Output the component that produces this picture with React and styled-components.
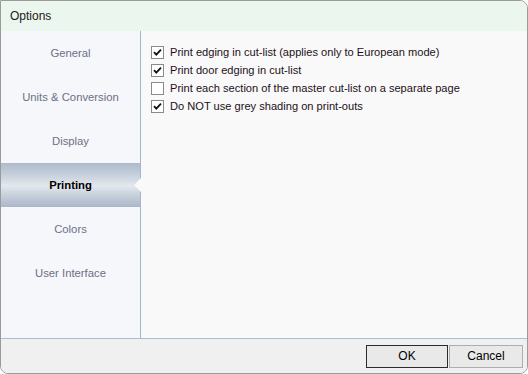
import React from 'react';
import styled, { createGlobalStyle } from 'styled-components';

const Global = createGlobalStyle`
  html, body { margin: 0; padding: 0; background: #ffffff; }
  body { font-family: "Liberation Sans", Arial, sans-serif; }
`;

const Window = styled.div`
  width: 528px;
  height: 374px;
  box-sizing: border-box;
  border: 1px solid #9a9a9a;
  border-radius: 0 8px 8px 8px;
  overflow: hidden;
  display: flex;
  flex-direction: column;
  background: #f9f9f9;
`;

const TitleBar = styled.div`
  height: 30px;
  display: flex;
  align-items: center;
  padding-left: 9px;
  background: #ebf6ee;
  font-size: 12px;
  color: #1a1a1a;
`;

const Body = styled.div`
  flex: 1;
  display: flex;
`;

const Sidebar = styled.div`
  width: 139px;
  background: #f5f7fb;
  border-right: 1px solid #a3b6cd;
  display: flex;
  flex-direction: column;
`;

const NavItem = styled.div`
  position: relative;
  height: 44px;
  display: flex;
  align-items: center;
  justify-content: center;
  font-size: 11.3px;
  color: ${p => (p.$active ? '#000' : '#6d6f86')};
  font-weight: ${p => (p.$active ? 700 : 400)};
  background: ${p =>
    p.$active
      ? 'linear-gradient(to bottom, #adbacb 0%, #cfd7e1 35%, #e4e8ee 52%, #cbd3de 70%, #aab7c9 100%)'
      : 'transparent'};
`;

const Notch = styled.span`
  position: absolute;
  right: -1px;
  top: 50%;
  margin-top: -7px;
  width: 0;
  height: 0;
  border-top: 7px solid transparent;
  border-bottom: 7px solid transparent;
  border-right: 7px solid #f9f9f9;
`;

const Content = styled.div`
  flex: 1;
  padding: 12px 0 0 10px;
  display: flex;
  flex-direction: column;
`;

const Option = styled.label`
  height: 18px;
  display: flex;
  align-items: center;
  gap: 6px;
  font-size: 11.1px;
  color: #1c1020;
`;

const Box = styled.span`
  width: 11px;
  height: 11px;
  border: 1px solid #8a8a8a;
  background: #fff;
  display: flex;
  align-items: center;
  justify-content: center;
  flex: none;
`;

const Footer = styled.div`
  height: 34px;
  border-top: 1px solid #a8bed6;
  background: #f0f0f0;
  display: flex;
  align-items: center;
  justify-content: flex-end;
  gap: 1px;
  padding-right: 4px;
`;

const Button = styled.button`
  width: ${p => (p.$default ? '82px' : '74px')};
  height: 23px;
  box-sizing: border-box;
  border: 1px solid ${p => (p.$default ? '#2b2b2b' : '#adadad')};
  background: #e9e9e9;
  font-family: "Liberation Sans", Arial, sans-serif;
  font-size: 12px;
  color: #000;
  padding: 0;
`;

const Check = () => (
  <svg width="9" height="9" viewBox="0 0 9 9">
    <path d="M1 4.2 L3.3 6.6 L8 1.6" fill="none" stroke="#111" strokeWidth="1.8" />
  </svg>
);

const nav = ['General', 'Units & Conversion', 'Display', 'Printing', 'Colors', 'User Interface'];

const options = [
  { text: 'Print edging in cut-list (applies only to European mode)', on: true },
  { text: 'Print door edging in cut-list', on: true },
  { text: 'Print each section of the master cut-list on a separate page', on: false },
  { text: 'Do NOT use grey shading on print-outs', on: true },
];

export default function App() {
  return (
    <>
      <Global />
      <Window>
        <TitleBar>Options</TitleBar>
        <Body>
          <Sidebar>
            {nav.map(n => (
              <NavItem key={n} $active={n === 'Printing'}>
                {n}
                {n === 'Printing' && <Notch />}
              </NavItem>
            ))}
          </Sidebar>
          <Content>
            {options.map(o => (
              <Option key={o.text}>
                <Box>{o.on && <Check />}</Box>
                {o.text}
              </Option>
            ))}
          </Content>
        </Body>
        <Footer>
          <Button $default>OK</Button>
          <Button>Cancel</Button>
        </Footer>
      </Window>
    </>
  );
}
